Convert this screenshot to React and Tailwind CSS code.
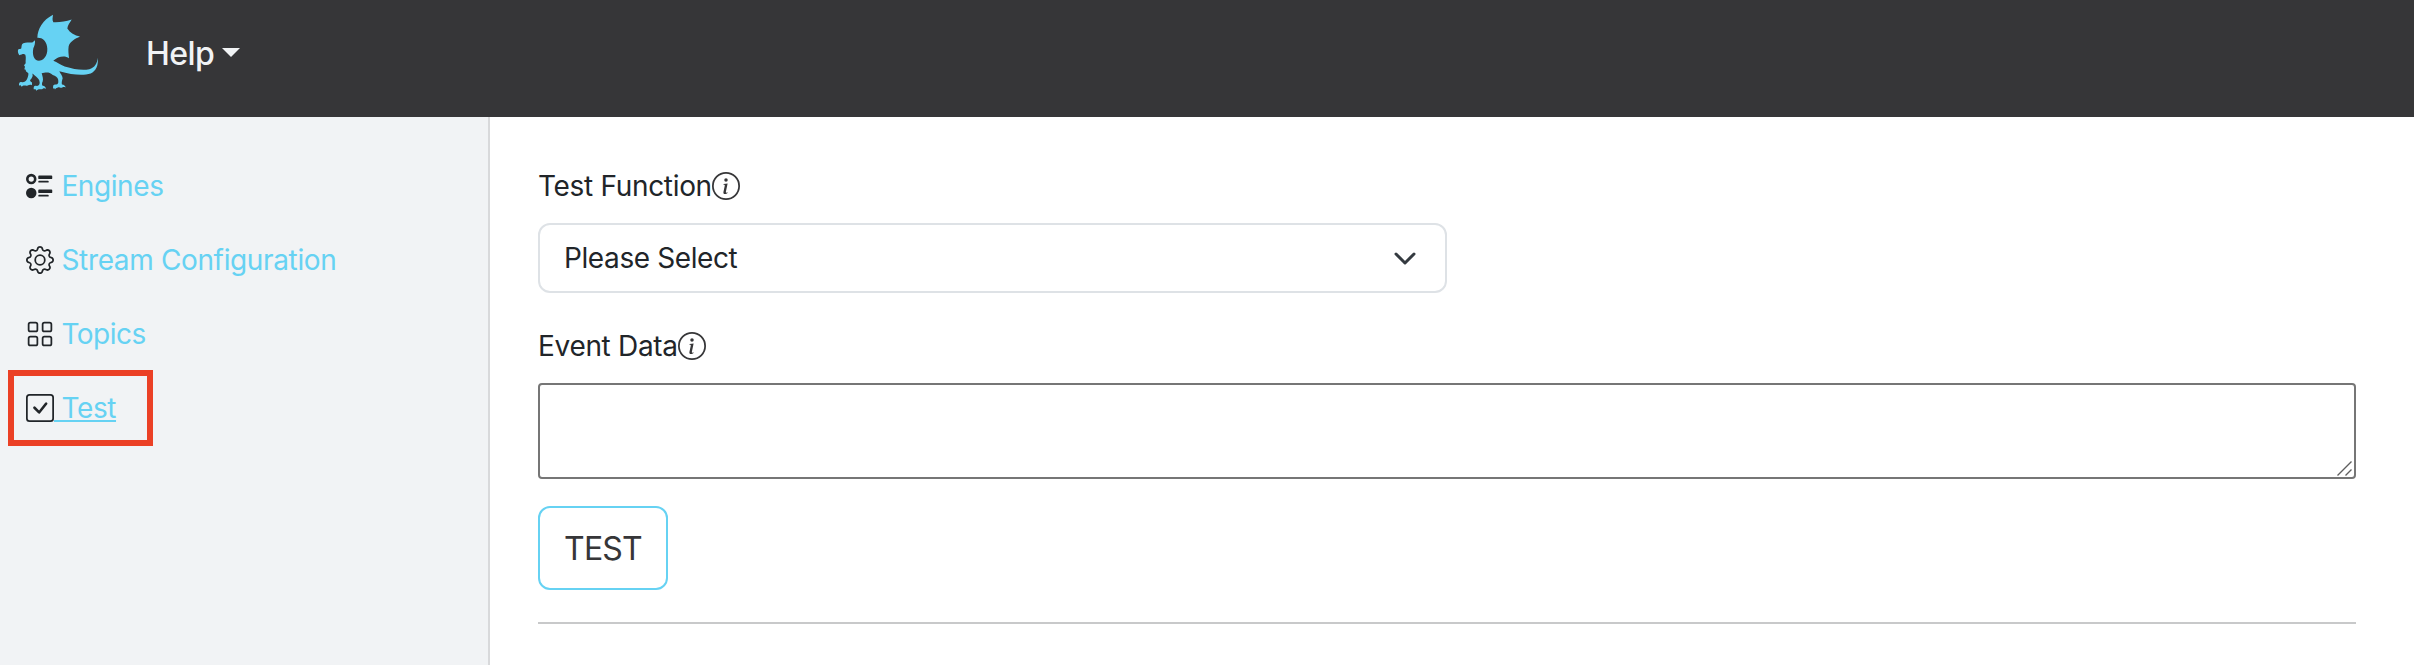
import React from "react";
import { BsUiRadios, BsGear, BsGrid, BsCheckSquare, BsInfoCircle } from "react-icons/bs";

function DragonLogo() {
  return (
    <svg viewBox="0 0 360 350" className="h-[117px] w-[120px]" fill="#66d2f3">
      <path
        fillRule="evenodd"
        d="M159 44C158 54 156 59 160 66C178 67 196 64 215 58C209 68 203 76 202 85C210 98 224 106 240 109C225 116 210 124 206 138C204 150 206 162 207 174C195 165 174 168 160 182C172 187 180 193 194 199C222 207 247 212 268 207C284 203 292 190 293 173C296 196 288 213 272 220C248 227 217 224 178 213C181 220 187 225 188 234C186 242 184 247 186 253C192 254 196 257 197 262C192 260 190 260 187 262C183 265 179 261 175 261C171 263 168 263 165 268L163 264L159 265C160 258 158 254 165 253C170 253 174 252 175 246C176 236 171 230 164 227C156 224 150 217 145 217C137 216 131 218 125 219C127 227 131 236 128 244C125 250 126 253 127 256C133 257 137 260 138 266C132 262 129 266 126 267C120 268 115 265 109 272L107 267L101 267C101 261 101 256 108 257C115 258 119 254 119 247C119 238 113 234 108 229C102 225 100 221 96 220C101 226 96 234 91 239C89 242 91 244 96 247L96 255C91 252 87 254 83 256C77 258 70 253 65 260L62 255L57 256C57 249 58 244 66 246C72 247 77 244 80 239C83 232 86 225 85 219C80 216 77 214 77 209L73 207L75 200L72 195L77 189C76 181 79 174 76 164C71 159 66 163 58 165C54 160 52 152 55 147L63 146C66 140 63 132 70 129C79 125 88 128 97 127L105 120C106 129 103 138 100 144C96 164 102 181 117 182C137 179 145 158 141 138C138 122 127 112 112 113C113 87 128 60 159 44Z"
      />
    </svg>
  );
}

const links = [
  { label: "Engines", Icon: BsUiRadios, text: "tracking-[-0.42px]" },
  { label: "Stream Configuration", Icon: BsGear, text: "tracking-[-0.36px]" },
  { label: "Topics", Icon: BsGrid, text: "tracking-[-0.5px]" },
  { label: "Test", Icon: BsCheckSquare, text: "tracking-[-0.4px]", active: true },
];

function SideLink({ label, Icon, text, active }) {
  return (
    <li className="relative flex h-[74px] items-center pl-[26px]">
      <Icon className="size-7 shrink-0 text-[#212529]" />
      <a
        href="#"
        className={
          "whitespace-pre text-[28px] font-[430] leading-[42px] text-[#66d2f3] " +
          text +
          (active ? " underline decoration-2 underline-offset-[2px]" : "")
        }
      >
        {" " + label}
      </a>
      {active && (
        <span className="absolute left-2 top-[-1px] h-[76px] w-[145px] border-[6px] border-[#eb4025]" />
      )}
    </li>
  );
}

function FieldLabel({ children }) {
  return (
    <div className="flex h-[42px] items-center text-[28px] leading-[42px] tracking-[-0.32px] text-[#212529]">
      <span className="font-[430]">{children}</span>
      <BsInfoCircle className="size-7 text-[#363638]" />
    </div>
  );
}

export default function App() {
  return (
    <div className="flex h-[665px] w-full flex-col overflow-hidden bg-white font-['Inter','Liberation_Sans',sans-serif]">
      <header className="flex h-[117px] shrink-0 bg-[#363638]">
        <DragonLogo />
        <button className="ml-[26px] mt-[30px] flex h-12 items-center text-[32px] font-[450] leading-[48px] tracking-[-0.6px] text-[#f1f3f5]">
          Help
          <svg viewBox="0 0 18 9" className="-mt-[4px] ml-2 h-[9px] w-[18px]" fill="currentColor">
            <path d="M0 0H18L9 9Z" />
          </svg>
        </button>
      </header>
      <div className="flex min-h-0 grow">
        <aside className="w-[490px] shrink-0 border-r-2 border-[#d8d9db] bg-[#f1f3f5] pt-8">
          <ul>
            {links.map((link) => (
              <SideLink key={link.label} {...link} />
            ))}
          </ul>
        </aside>
        <main className="flex min-w-0 grow flex-col items-start pl-12 pr-[58px] pt-12">
          <FieldLabel>Test Function</FieldLabel>
          <button className="mt-4 flex h-[70px] w-[909px] items-center justify-between rounded-xl border-2 border-[#dee2e6] pl-6 pr-[29px] text-[28px] font-[430] leading-[42px] tracking-[-0.4px] text-[#212529]">
            Please Select
            <svg viewBox="0 0 22 13" className="h-[13px] w-[22px]" fill="none" stroke="#343a40" strokeWidth="3" strokeLinecap="round" strokeLinejoin="round">
              <path d="M2 2L11 11L20 2" />
            </svg>
          </button>
          <div className="mt-8">
            <FieldLabel>Event Data</FieldLabel>
          </div>
          <div className="mt-4 flex h-24 w-full items-end justify-end rounded border-2 border-[#767676] pb-px pr-0.5">
            <svg viewBox="0 0 15 15" className="size-[15px]" fill="none" stroke="#5f5f5f" strokeWidth="1.4">
              <path d="M0.5 14.5L14.5 0.5M8.5 14.5L14.5 8.5" />
            </svg>
          </div>
          <button className="mt-[27px] h-[84px] w-[130px] rounded-xl border-2 border-[#66d2f3] pt-0.5 text-[32px] font-[430] leading-[48px] tracking-[-0.8px] text-[#363638]">
            TEST
          </button>
          <hr className="mt-8 h-0.5 w-full border-0 bg-[#c8c9ca]" />
        </main>
      </div>
    </div>
  );
}
